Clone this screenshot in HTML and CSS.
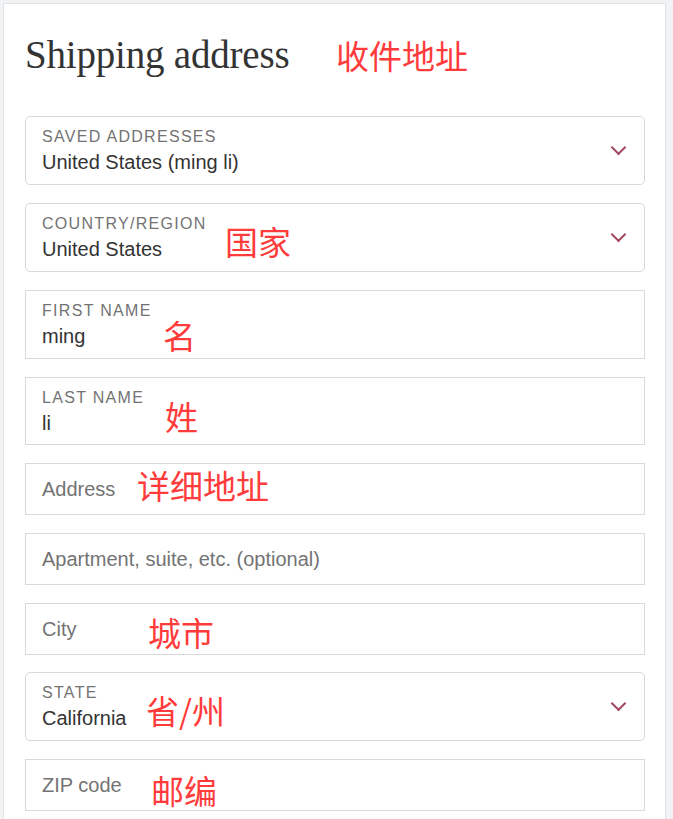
FILE: index.html
```html
<!DOCTYPE html>
<html lang="en">
<head>
  <meta charset="UTF-8" />
  <title>Checkout - Shipping</title>
  <meta name="viewport" content="width=device-width, initial-scale=1" />
  <link rel="stylesheet" href="styles.css">
</head>
<body>

<div class="card">
  <div class="card-head">
    <h2>Shipping address</h2>
    <span class="note note-title">收件地址</span>
  </div>

  <form class="ship-form">
    <div class="field select">
      <label>Saved addresses</label>
      <div class="value">United States (ming li)</div>
      <span class="chevron"></span>
    </div>

    <div class="field select">
      <label>Country/Region</label>
      <div class="value">United States</div>
      <span class="chevron"></span>
      <span class="note note-country">国家</span>
    </div>

    <div class="field">
      <label>First name</label>
      <div class="value">ming</div>
      <span class="note note-first">名</span>
    </div>

    <div class="field short">
      <label>Last name</label>
      <div class="value">li</div>
      <span class="note note-last">姓</span>
    </div>

    <div class="field empty">
      <div class="placeholder">Address</div>
      <span class="note note-address">详细地址</span>
    </div>

    <div class="field empty">
      <div class="placeholder">Apartment, suite, etc. (optional)</div>
    </div>

    <div class="field empty">
      <div class="placeholder">City</div>
      <span class="note note-city">城市</span>
    </div>

    <div class="field select tight">
      <label>State</label>
      <div class="value">California</div>
      <span class="chevron"></span>
      <span class="note note-state">省/州</span>
    </div>

    <div class="field empty">
      <div class="placeholder">ZIP code</div>
      <span class="note note-zip">邮编</span>
    </div>
  </form>
</div>

</body>
</html>
```

FILE: styles.css
```css
* { box-sizing: border-box; }
body {
  margin: 0;
  padding: 3px 7px 0 3px;
  background: #f1f2f4;
  font-family: 'Liberation Sans', Arial, sans-serif;
}
.card {
  background: #fff;
  border: 1px solid #e2e3e5;
  border-bottom: none;
  padding: 27px 20px 20px 21px;
  min-height: 820px;
}
.card-head {
  position: relative;
}
h2 {
  margin: 0;
  font-family: 'Liberation Serif', 'Times New Roman', serif;
  font-weight: normal;
  font-size: 39px;
  line-height: 47px;
  color: #333;
  letter-spacing: -0.2px;
}

/* red annotations laid over the form */
.note {
  position: absolute;
  font-family: 'Noto Sans CJK SC', sans-serif;
  font-size: 33px;
  line-height: 1;
  color: #ff3b3b;
  white-space: nowrap;
}
.note-title { left: 311px; top: 8px; }
.note-country { left: 199px; top: 21px; }
.note-first { left: 137px; top: 28px; }
.note-last { left: 139px; top: 22px; }
.note-address { left: 111px; top: 5px; }
.note-city { left: 122px; top: 12px; }
.note-state { left: 120px; top: 21px; }
.note-zip { left: 125px; top: 14px; }

.ship-form {
  margin-top: 38px;
  display: flex;
  flex-direction: column;
  gap: 18px;
}
.field {
  position: relative;
  border: 1px solid #d9d9d9;
  padding: 10px 16px 11px;
  height: 69px;
}
.field.short {
  height: 68px;
}
.field.tight {
  margin-top: -1px;
}
.field.select {
  border-radius: 5px;
}
.field label {
  display: block;
  font-size: 16px;
  line-height: 19px;
  letter-spacing: 1.3px;
  text-transform: uppercase;
  color: #737373;
  margin-bottom: 4px;
}
.field .value {
  font-size: 20px;
  line-height: 24px;
  color: #333;
}
.field.empty {
  height: 52px;
  padding: 13px 16px;
}
.placeholder {
  font-size: 20px;
  line-height: 24px;
  color: #737373;
}
.chevron {
  position: absolute;
  right: 20px;
  top: 25px;
  width: 11px;
  height: 11px;
  border-right: 2.5px solid #a2485f;
  border-bottom: 2.5px solid #a2485f;
  transform: rotate(45deg);
}
```
